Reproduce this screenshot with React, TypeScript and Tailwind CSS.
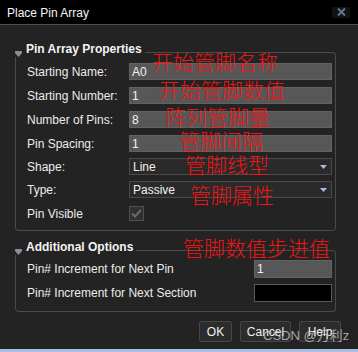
import React from 'react';

const font = "font-['Liberation_Sans',Arial,sans-serif]";

const CollapseIcon = () => (
  <svg width="7" height="6" viewBox="0 0 7 6" className="shrink-0 self-end">
    <path d="M0.5 0 H6.5 Q7 0 7 0.5 V2 L3.5 6 L0 2 V0.5 Q0 0 0.5 0 Z" fill="#8f8f8f" />
  </svg>
);

const GroupHeader: React.FC<{ title: string }> = ({ title }) => (
  <div className="flex h-[15px]">
    <CollapseIcon />
    <span className="ml-[4px] self-center text-[12px] font-bold leading-[15px] text-[#f4f4f4]">{title}</span>
    <div className="ml-[3px] h-[5px] flex-1 self-end rounded-tr-[4px] border-t border-r border-[#4a4a4a]"></div>
  </div>
);

const TextField: React.FC<{ value: string; className?: string }> = ({ value, className = '' }) => (
  <div className={`flex items-center border border-[#626262] bg-[#575757] pl-[2px] text-[12px] leading-[14px] text-[#f2f2f2] ${className}`}>
    {value}
  </div>
);

const Select: React.FC<{ value: string }> = ({ value }) => (
  <div className="flex h-[17px] w-[203px] items-center justify-between border border-[#4a4a4a] bg-[#2a2a2a] pl-[3px] pr-[4px] text-[12px] leading-[14px] text-[#f2f2f2]">
    <span>{value}</span>
    <svg width="7" height="4" viewBox="0 0 7 4">
      <path d="M0 0 H7 L3.5 4 Z" fill="#a3bcdc" />
    </svg>
  </div>
);

const Row: React.FC<{ label: string; className?: string; children: React.ReactNode }> = ({ label, className = '', children }) => (
  <div className={`flex items-center ${className}`}>
    <span className="w-[102px] text-[12px] leading-[14px] text-[#ececec]">{label}</span>
    {children}
  </div>
);

const notes = [
  { text: '开始管脚名称', cls: 'left-[152px] top-[51px]' },
  { text: '开始管脚数值', cls: 'left-[159px] top-[79px]' },
  { text: '阵列管脚量', cls: 'left-[165px] top-[106px]' },
  { text: '管脚间隔', cls: 'left-[179px] top-[130px]' },
  { text: '管脚线型', cls: 'left-[185px] top-[154px]' },
  { text: '管脚属性', cls: 'left-[190px] top-[184px]' },
  { text: '管脚数值步进值', cls: 'left-[183px] top-[237px]' },
];

export default function App() {
  return (
    <div className={`relative flex h-[352px] w-[358px] flex-col overflow-hidden bg-[#222322] ${font}`}>
      {/* title bar */}
      <div className="flex h-[24px] items-center justify-between bg-black pl-[7px] pr-[8px]">
        <span className="pt-[1px] text-[12px] leading-[14px] text-[#f5f5f5]">Place Pin Array</span>
        <div className="flex h-[11px] w-[18px] items-center justify-center bg-[#121212]">
          <svg width="9" height="8" viewBox="0 0 9 8">
            <path d="M1 0.5 L8 7.5 M8 0.5 L1 7.5" stroke="#5f7596" strokeWidth="2" />
          </svg>
        </div>
      </div>
      <div className="h-[1px] bg-[#505050]"></div>

      <div className="flex flex-1 flex-col">
        {/* Pin Array Properties */}
        <div className="ml-[15px] mt-[17px] w-[321px]">
          <GroupHeader title="Pin Array Properties" />
          <div className="flex flex-col rounded-b-[4px] border-x border-b border-[#4a4a4a] pb-[9px] pl-[11px] pr-[2px] pt-[6px]">
            <Row label="Starting Name:">
              <TextField value="A0" className="h-[17px] w-[203px]" />
            </Row>
            <Row label="Starting Number:" className="mt-[7px]">
              <TextField value="1" className="h-[17px] w-[203px]" />
            </Row>
            <Row label="Number of Pins:" className="mt-[7px]">
              <TextField value="8" className="h-[17px] w-[203px]" />
            </Row>
            <Row label="Pin Spacing:" className="mt-[7px]">
              <TextField value="1" className="h-[17px] w-[203px]" />
            </Row>
            <Row label="Shape:" className="mt-[6px]">
              <Select value="Line" />
            </Row>
            <Row label="Type:" className="mt-[6px]">
              <Select value="Passive" />
            </Row>
            <Row label="Pin Visible" className="mt-[8px]">
              <div className="flex h-[15px] w-[15px] items-center justify-center border border-[#505050] bg-[#303030]">
                <svg width="11" height="9" viewBox="0 0 11 9">
                  <path d="M1 4.5 L4 7.5 L10 1" fill="none" stroke="#6b6b6b" strokeWidth="2" />
                </svg>
              </div>
            </Row>
          </div>
        </div>

        {/* Additional Options */}
        <div className="ml-[15px] mt-[9px] w-[321px]">
          <GroupHeader title="Additional Options" />
          <div className="flex flex-col rounded-b-[4px] border-x border-b border-[#4a4a4a] pb-[9px] pl-[11px] pr-[2px] pt-[5px]">
            <div className="flex items-center">
              <span className="w-[227px] text-[12px] leading-[14px] text-[#ececec]">Pin# Increment for Next Pin</span>
              <TextField value="1" className="h-[18px] w-[78px]" />
            </div>
            <div className="mt-[6px] flex items-center">
              <span className="w-[227px] text-[12px] leading-[14px] text-[#ececec]">Pin# Increment for Next Section</span>
              <div className="h-[18px] w-[78px] border border-[#5a5a5a] bg-black"></div>
            </div>
          </div>
        </div>

        {/* buttons */}
        <div className="mt-[9px] flex justify-end gap-[8px] pr-[17px]">
          {[
            { t: 'OK', w: 'w-[33px]' },
            { t: 'Cancel', w: 'w-[51px]' },
            { t: 'Help', w: 'w-[42px]' },
          ].map((b) => (
            <button
              key={b.t}
              className={`flex h-[21px] ${b.w} items-center justify-center rounded-[2px] border border-[#464646] bg-[#2c2c2c] text-[12px] leading-[14px] text-[#f2f2f2]`}
            >
              {b.t}
            </button>
          ))}
        </div>
      </div>
      <div className="h-[3px] bg-[#a7c0df]"></div>

      {/* red annotations */}
      {notes.map((n) => (
        <span
          key={n.text}
          className={`absolute ${n.cls} whitespace-nowrap font-['Noto_Sans_CJK_SC',sans-serif] text-[21px] font-light leading-[21px] text-[#f21414]`}
        >
          {n.text}
        </span>
      ))}

      {/* watermark */}
      <span className="absolute left-[263px] top-[328px] whitespace-nowrap font-['Liberation_Sans','Noto_Sans_CJK_SC',sans-serif] text-[13px] leading-[15px] text-[#c9c9c9]/80">
        CSDN @万利z
      </span>
    </div>
  );
}
